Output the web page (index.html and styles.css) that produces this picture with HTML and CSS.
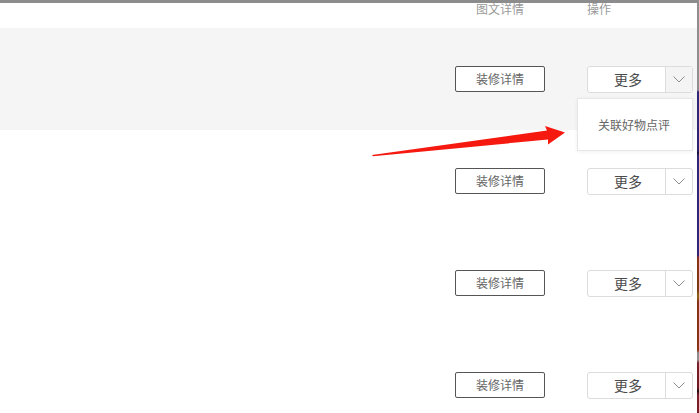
FILE: index.html
```html
<!DOCTYPE html>
<html lang="zh">
<head>
<meta charset="utf-8">
<title>列表</title>
<link rel="stylesheet" href="styles.css">
</head>
<body>
<div class="main">
  <div class="topbar"></div>
  <div class="grid header">
    <div class="cell-left"></div>
    <div class="col-detail head-text">图文详情</div>
    <div></div>
    <div class="col-op head-text">操作</div>
  </div>

  <div class="grid row row-active">
    <div class="cell-left"></div>
    <div class="col-detail"><button class="btn-outline">装修详情</button></div>
    <div></div>
    <div class="col-op">
      <div class="split">
        <span class="split-main">更多</span>
        <span class="split-caret caret-active"><svg width="12" height="7" viewBox="0 0 12 7"><polyline points="0.5,0.5 6,6 11.5,0.5" fill="none" stroke="#8c8c8c" stroke-width="1"/></svg></span>
        <div class="dropdown"><span>关联好物点评</span></div>
      </div>
    </div>
  </div>

  <div class="grid row">
    <div class="cell-left"></div>
    <div class="col-detail"><button class="btn-outline">装修详情</button></div>
    <div></div>
    <div class="col-op">
      <div class="split">
        <span class="split-main">更多</span>
        <span class="split-caret"><svg width="12" height="7" viewBox="0 0 12 7"><polyline points="0.5,0.5 6,6 11.5,0.5" fill="none" stroke="#8c8c8c" stroke-width="1"/></svg></span>
      </div>
    </div>
  </div>

  <div class="grid row">
    <div class="cell-left"></div>
    <div class="col-detail"><button class="btn-outline">装修详情</button></div>
    <div></div>
    <div class="col-op">
      <div class="split">
        <span class="split-main">更多</span>
        <span class="split-caret"><svg width="12" height="7" viewBox="0 0 12 7"><polyline points="0.5,0.5 6,6 11.5,0.5" fill="none" stroke="#8c8c8c" stroke-width="1"/></svg></span>
      </div>
    </div>
  </div>

  <div class="grid row">
    <div class="cell-left"></div>
    <div class="col-detail"><button class="btn-outline">装修详情</button></div>
    <div></div>
    <div class="col-op">
      <div class="split">
        <span class="split-main">更多</span>
        <span class="split-caret"><svg width="12" height="7" viewBox="0 0 12 7"><polyline points="0.5,0.5 6,6 11.5,0.5" fill="none" stroke="#8c8c8c" stroke-width="1"/></svg></span>
      </div>
    </div>
  </div>

  <svg class="annot-arrow" width="210" height="40" viewBox="0 0 210 40">
    <polygon points="12,35 187,10.5 185,6 205,12.5 188,24.5 188,19.5 13,36.3" fill="#f5190f"/>
  </svg>
</div>
<div class="edge-strip"></div>
</body>
</html>
```

FILE: styles.css
```css
html, body {
  margin: 0;
  padding: 0;
}
body {
  display: flex;
  height: 413px;
  overflow: hidden;
  background: #fff;
  font-family: "Noto Sans CJK SC", "Noto Sans", sans-serif;
}
.main {
  position: relative;
  flex: 1;
  display: flex;
  flex-direction: column;
  overflow: hidden;
}
.topbar {
  height: 3px;
  background: #8c8c8c;
  flex: none;
}
.grid {
  display: grid;
  grid-template-columns: 1fr 90px 42px 106px 4px;
  flex: none;
}
.header {
  height: 25px;
  align-items: start;
}
.head-text {
  font-size: 12px;
  line-height: 12px;
  color: #9a9a9a;
}
.header .col-detail {
  text-align: center;
}
.row {
  height: 102px;
  align-items: center;
}
.row-active {
  background: #f5f5f5;
}
.btn-outline {
  width: 90px;
  height: 26px;
  box-sizing: border-box;
  border: 1px solid #555;
  border-radius: 2px;
  background: #fff;
  color: #666;
  font-family: inherit;
  font-size: 12px;
  line-height: 24px;
  padding: 0;
  display: block;
}
.split {
  position: relative;
  width: 106px;
  height: 27px;
  box-sizing: border-box;
  border: 1px solid #dcdcdc;
  border-radius: 3px;
  background: #fff;
  display: flex;
}
.split-main {
  flex: 1;
  display: flex;
  align-items: center;
  justify-content: center;
  padding-left: 3px;
  font-size: 14px;
  color: #4a4a4a;
}
.split-caret {
  width: 26px;
  border-left: 1px solid #dcdcdc;
  display: flex;
  align-items: center;
  justify-content: center;
}
.caret-active {
  background: #f4f4f4;
}
.dropdown {
  position: absolute;
  left: -11px;
  top: 31px;
  width: 116px;
  height: 53px;
  box-sizing: border-box;
  border: 1px solid #e6e6e6;
  background: #fff;
  box-shadow: 0 1px 4px rgba(0, 0, 0, 0.06);
  display: flex;
  align-items: center;
  padding-left: 20px;
  font-size: 12px;
  color: #666;
  z-index: 2;
}
.annot-arrow {
  position: absolute;
  left: 360px;
  top: 120px;
  z-index: 3;
}
.edge-strip {
  width: 2px;
  flex: none;
  background: linear-gradient(to bottom,
    #8f8f8f 0px, #8f8f8f 90px,
    #2d2778 92px, #2a2470 150px, #15123a 153px, #2d2778 156px, #2d2778 255px,
    #8a3216 258px, #7a3a10 290px, #8a6a10 296px, #8a3216 302px, #8a3216 350px,
    #8e8e8e 353px, #8e8e8e 360px,
    #7a2028 363px, #6a1a22 388px, #1a1010 391px, #7a2028 395px, #7a2028 413px);
}
```
